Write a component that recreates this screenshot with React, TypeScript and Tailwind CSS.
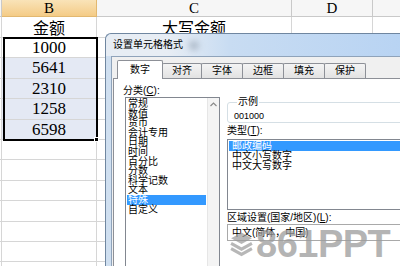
import React from 'react';

const gridLine = 'border-[#d6d6d6]';

const columns = [
  { key: 'A', width: 2, label: '' },
  { key: 'B', width: 95, label: 'B', selected: true },
  { key: 'C', width: 195, label: 'C' },
  { key: 'D', width: 81, label: 'D' },
  { key: 'E', width: 60, label: '' },
];

const amounts = ['1000', '5641', '2310', '1258', '6598'];

const categories = ['常规', '数值', '货币', '会计专用', '日期', '时间', '百分比', '分数', '科学记数', '文本', '特殊', '自定义'];

const types = ['邮政编码', '中文小写数字', '中文大写数字'];

const tabs = [
  { label: '数字', width: 46 },
  { label: '对齐', width: 40 },
  { label: '字体', width: 42 },
  { label: '边框', width: 42 },
  { label: '填充', width: 42 },
  { label: '保护', width: 42 },
];

const Sheet = () => {
  const rows: { b?: string; c?: string; height: string; shaded?: boolean }[] = [
    { b: '金额', c: '大写金额', height: 'h-[21px]' },
    ...amounts.map((a, i) => ({ b: a, height: 'h-[20.4px]', shaded: i > 0 })),
    ...Array.from({ length: 7 }, () => ({ height: 'h-[20.4px]' })),
  ];

  return (
    <div className="font-['Liberation_Serif','Noto_Sans_CJK_SC',serif] text-black">
      {/* column headers */}
      <div className="flex h-[17px]">
        {columns.map((col) => (
          <div
            key={col.key}
            style={{ width: col.width }}
            className={`shrink-0 flex items-center justify-center border-r border-b text-[15px] leading-none ${
              col.selected
                ? 'bg-linear-to-b from-[#f9e3b8] to-[#f4cb86] border-[#e2b870]'
                : 'bg-[#f6f6f6] border-[#c9c9c9]'
            }`}
          >
            {col.label}
          </div>
        ))}
      </div>
      {rows.map((row, r) => (
        <div key={r} className={`flex ${row.height}`}>
          {columns.map((col) => (
            <div
              key={col.key}
              style={{ width: col.width }}
              className={`shrink-0 flex items-center justify-center border-r border-b ${gridLine} ${
                col.key === 'B' && row.shaded ? 'bg-[#e4e9f4]' : 'bg-white'
              } ${r === 0 ? "text-[16px] font-['Noto_Sans_CJK_SC',sans-serif]" : 'text-[17px]'}`}
            >
              {col.key === 'B' ? row.b : col.key === 'C' ? row.c : ''}
            </div>
          ))}
        </div>
      ))}
      {/* selection border and fill handle */}
      <div className="absolute left-[3px] top-[37px] w-[95px] h-[104px] border-2 border-black" />
      <div className="absolute left-[94px] top-[137px] w-[5px] h-[5px] bg-black border border-white" />
    </div>
  );
};

const Watermark = () => (
  <div className="absolute left-[229px] top-[225px] flex items-center gap-[2px] pointer-events-none">
    <svg width="25" height="30" viewBox="0 0 24 28" className="opacity-70">
      <path d="M12 3 L22 8.5 L12 14 L2 8.5 Z" fill="#9a9a9a" />
      <path d="M2 13.5 L12 19 L22 13.5" fill="none" stroke="#9a9a9a" strokeWidth="3" />
      <path d="M2 18.5 L12 24 L22 18.5" fill="none" stroke="#9a9a9a" strokeWidth="3" />
    </svg>
    <span className="font-['Liberation_Sans',sans-serif] font-bold text-[38px] leading-none tracking-[-0.5px] text-[#9c9c9c]/75">
      861PPT
    </span>
  </div>
);

const Dialog = () => (
  <div className="absolute left-[105px] top-[33px] w-[310px] h-[240px] flex flex-col rounded-tl-[6px] border-l border-t border-[#6f86a0] bg-[#cfdff0] font-['Liberation_Sans','Noto_Sans_CJK_SC',sans-serif] text-black">
    {/* title bar */}
    <div className="relative h-[22px] flex items-center pl-[7px] rounded-tl-[6px] bg-linear-to-r from-[#e7edf4] from-20% via-[#c8dcf2] via-40% to-[#b7d3f3]">
      <span className="text-[10px] leading-none">设置单元格格式</span>
      <div className="ml-[6px] w-[10px] h-[9px] rounded-full bg-[#9aa7b6] blur-[3px] opacity-70" />
    </div>
    {/* body */}
    <div className="flex-1 ml-[5px] bg-[#f0f0f0] border-l border-t border-[#8fa3ba] pl-[1px] pt-[3px] flex flex-col">
      <div className="flex items-end h-[18px] pl-[4px]">
        {tabs.map((tab, i) => (
          <div
            key={tab.label}
            style={{ width: tab.width }}
            className={`shrink-0 flex items-center justify-center text-[10px] leading-none border-[#8d9097] ${
              i === 0
                ? 'relative z-10 h-[19px] -mb-px bg-white border-x border-t rounded-t-[2px]'
                : 'h-[15px] -ml-px bg-linear-to-b from-[#f4f4f4] to-[#e2e2e2] border-x border-t rounded-t-[2px]'
            }`}
          >
            {tab.label}
          </div>
        ))}
      </div>
      {/* tab panel */}
      <div className="flex-1 bg-white border-l border-t border-[#8d9097] pl-[11px] pt-[5px] flex gap-[7px]">
        {/* category */}
        <div className="w-[95px] shrink-0 flex flex-col">
          <div className="-ml-[2px] h-[13px] text-[10px] leading-[13px]">
            分类(<span className="underline">C</span>):
          </div>
          <div className="flex-1 flex border border-[#828790]">
            <div className="flex-1 px-[1px] pt-[1px]">
              {categories.map((c) => (
                <div
                  key={c}
                  className={`h-[9.6px] pl-[1px] text-[10px] leading-[9.6px] whitespace-nowrap ${
                    c === '特殊' ? 'bg-[#3399ff] text-white' : ''
                  }`}
                >
                  {c}
                </div>
              ))}
            </div>
            <div className="w-[12px] bg-[#f4f4f4] border-l border-[#e6e6e6] flex justify-center pt-[4px]">
              <svg width="7" height="5" viewBox="0 0 7 5">
                <path d="M0.5 4 L3.5 1 L6.5 4" fill="none" stroke="#8a8a8a" strokeWidth="1.2" />
              </svg>
            </div>
          </div>
        </div>
        {/* right side */}
        <div className="w-[200px] shrink-0 flex flex-col">
          <fieldset className="mt-[12px] border border-[#d5dfe5] rounded-[3px] pl-[6px] pb-[1px]">
            <legend className="ml-[3px] px-[1px] text-[10px] leading-[12px]">示例</legend>
            <div className="text-[9px] leading-[10px] mt-[3px]">001000</div>
          </fieldset>
          <div className="mt-[1px] h-[13px] text-[10px] leading-[13px]">
            类型(<span className="underline">T</span>):
          </div>
          <div className="mt-[2px] h-[71px] border border-[#828790] px-[1px] pt-[1px]">
            {types.map((t, i) => (
              <div
                key={t}
                className={`h-[10px] pl-[3px] text-[10px] leading-[10px] ${i === 0 ? 'bg-[#3399ff] text-white' : ''}`}
              >
                {t}
              </div>
            ))}
          </div>
          <div className="mt-[1px] h-[13px] text-[10px] leading-[13px]">
            区域设置(国家/地区)(<span className="underline">L</span>):
          </div>
          <div className="h-[17px] border border-[#a9a9a9] flex items-center pl-[4px] text-[10px] leading-none">
            中文(简体，中国)
          </div>
        </div>
      </div>
    </div>
  </div>
);

export default function App() {
  return (
    <div className="relative w-[400px] h-[266px] overflow-hidden bg-white">
      <Sheet />
      <Dialog />
      <Watermark />
    </div>
  );
}
